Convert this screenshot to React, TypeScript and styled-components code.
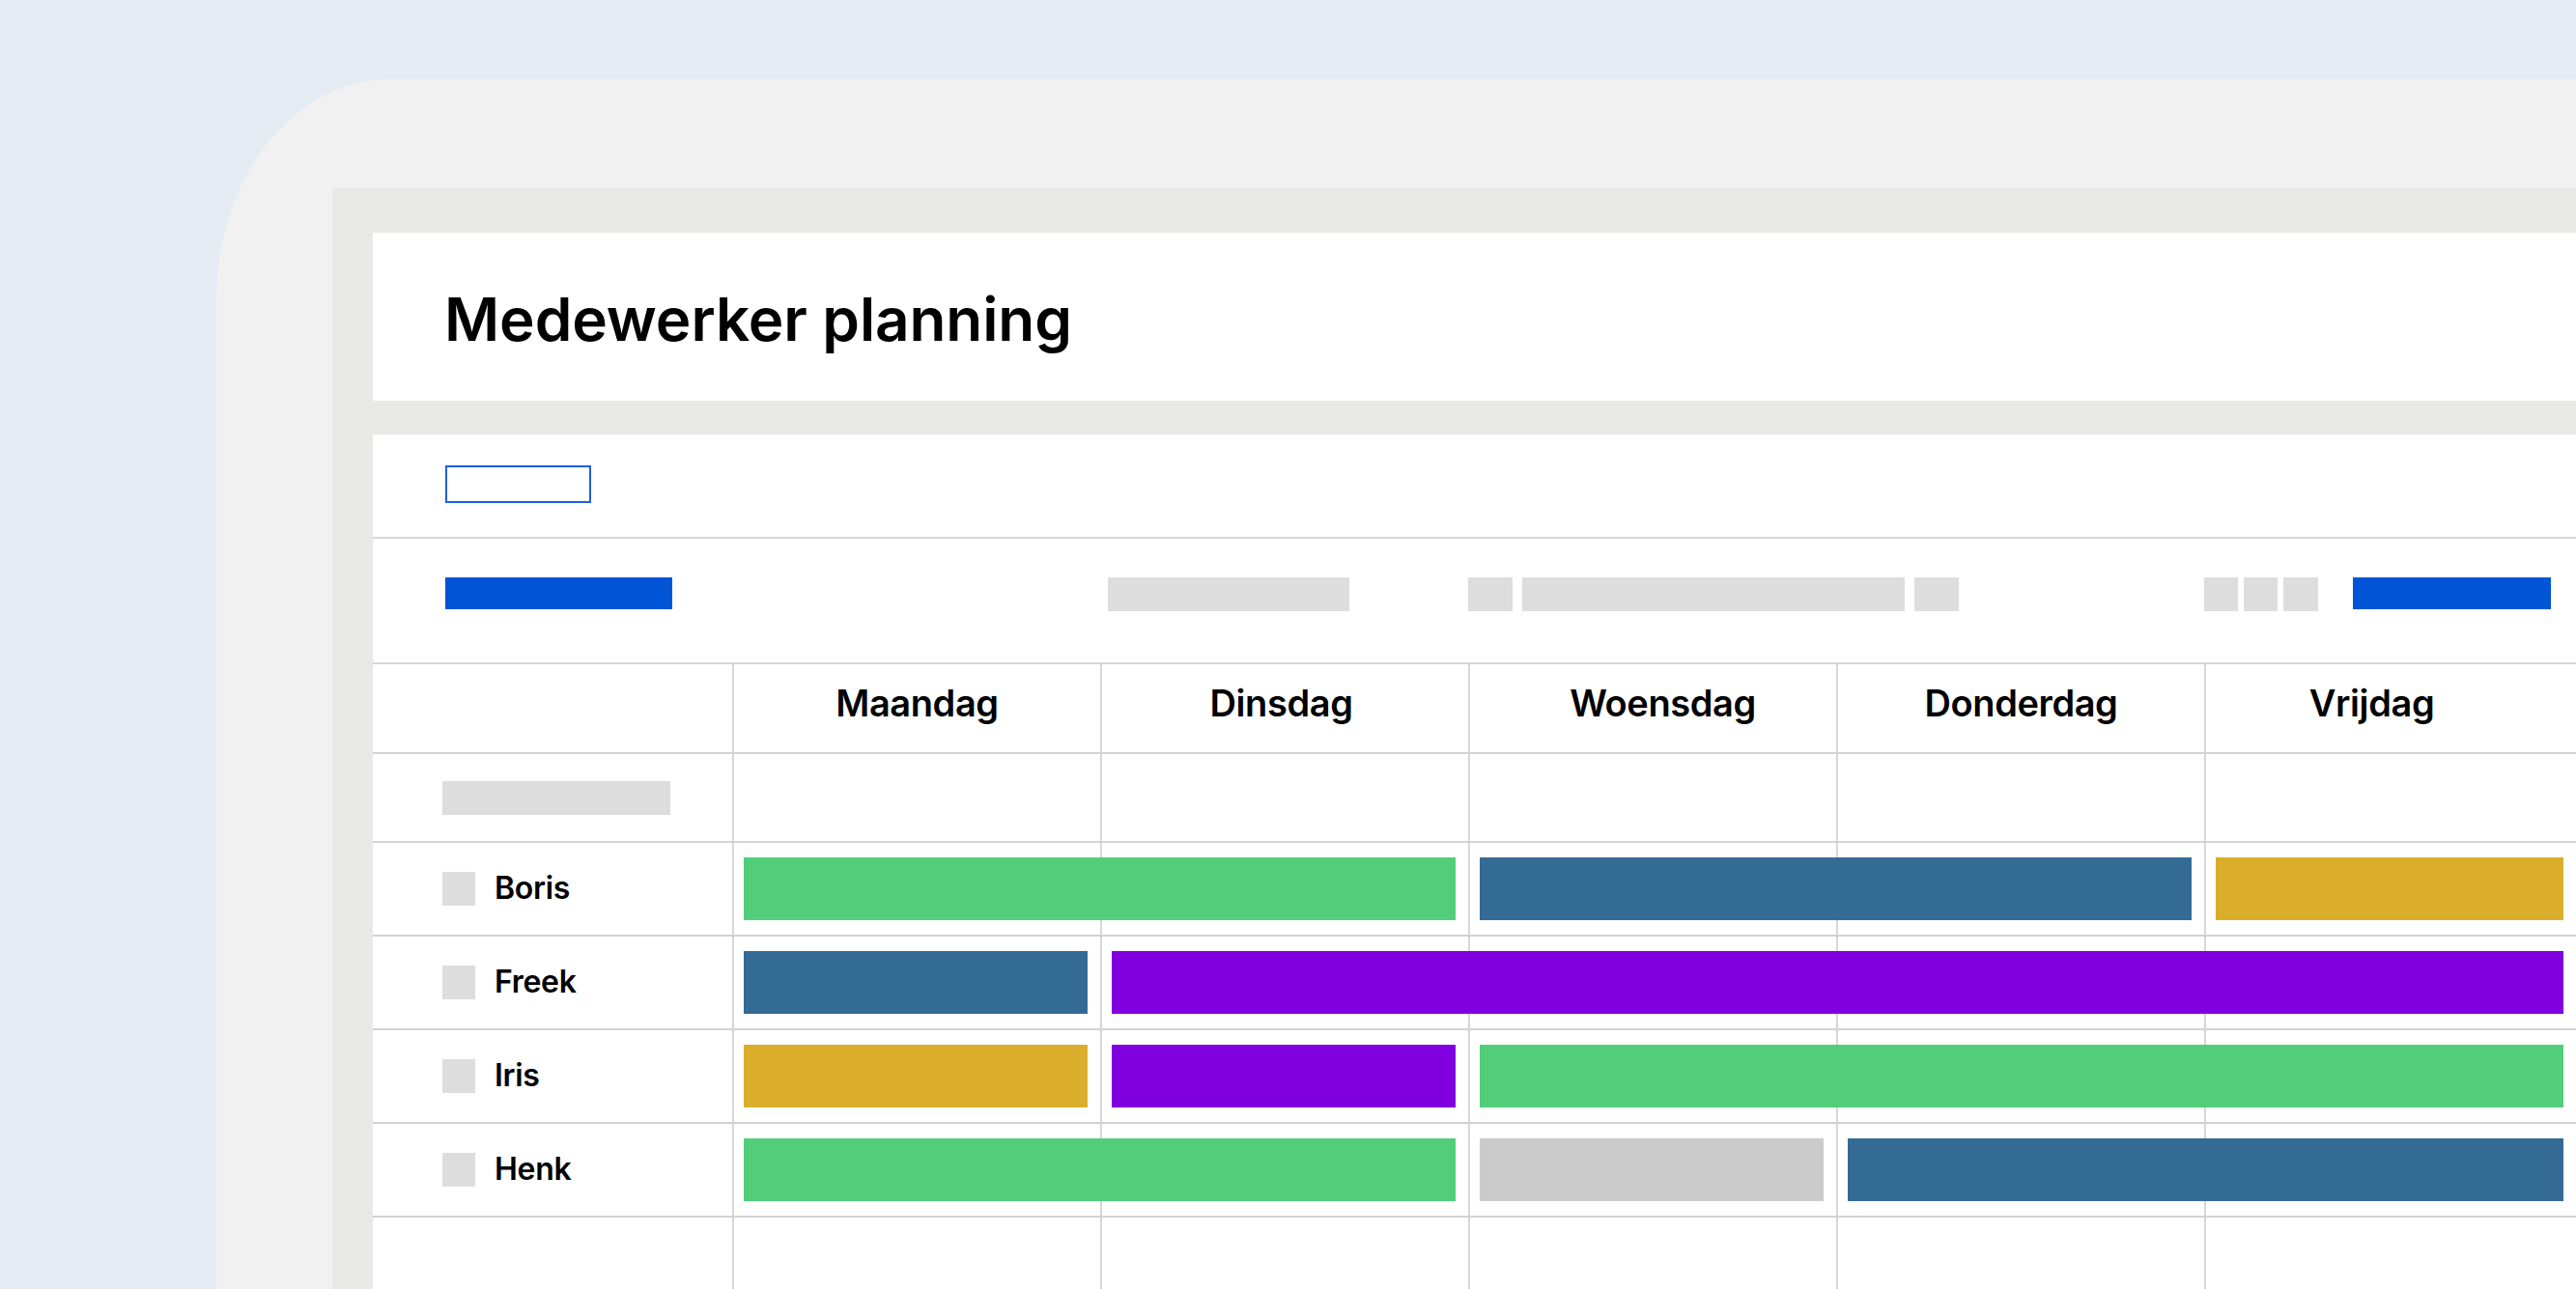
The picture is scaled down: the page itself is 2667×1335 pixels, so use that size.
import React from "react";
import styled, { createGlobalStyle } from "styled-components";

const Global = createGlobalStyle`
  html, body { margin: 0; padding: 0; }
  body {
    background: #e4ebf2;
    overflow: hidden;
    font-family: "Inter", "Lato", "Noto Sans", "Liberation Sans", sans-serif;
  }
  * { box-sizing: border-box; }
`;

const Page = styled.div`
  width: 2667px;
  height: 1335px;
  padding: 82px 0 0 224px;
  display: flex;
  flex-direction: column;
  overflow: hidden;
`;

const Device = styled.div`
  flex: 1;
  background: #f1f1f1;
  border-top-left-radius: 180px 227px;
  padding: 112px 0 0 120px;
  display: flex;
  flex-direction: column;
`;

const Frame = styled.div`
  flex: 1;
  background: #e8e8e6;
  padding: 47px 0 0 42px;
  display: flex;
  flex-direction: column;
  gap: 35px;
`;

const HeaderPanel = styled.header`
  height: 174px;
  background: #ffffff;
  display: flex;
  align-items: center;
  padding-left: 74px;
`;

const Title = styled.h1`
  margin: 0;
  font-family: "Inter", "Lato", "Noto Sans", sans-serif;
  font-weight: 600;
  font-size: 62px;
  letter-spacing: -0.1px;
  color: #000;
  line-height: 1;
  padding-top: 6px;
`;

const Content = styled.main`
  flex: 1;
  background: #ffffff;
  display: flex;
  flex-direction: column;
`;

const FilterBar = styled.div`
  height: 108px;
  padding: 32px 0 0 75px;
  border-bottom: 2px solid #d6d6d6;
`;

const OutlineInput = styled.div`
  width: 151px;
  height: 39px;
  border: 2px solid #1a5fe0;
  background: #fff;
`;

const Toolbar = styled.div`
  height: 130px;
  padding: 40px 26px 0 75px;
  border-bottom: 2px solid #d6d6d6;
  display: flex;
  align-items: flex-start;
`;

const Group = styled.div<{ $ml?: number; $gap: number }>`
  display: flex;
  gap: ${(p) => p.$gap}px;
  margin-left: ${(p) => p.$ml ?? 0}px;
`;

const Block = styled.div<{ $w: number; $primary?: boolean }>`
  width: ${(p) => p.$w}px;
  height: ${(p) => (p.$primary ? 33 : 35)}px;
  background: ${(p) => (p.$primary ? "#0055d6" : "#dddddd")};
`;

const Table = styled.div`
  flex: 1;
  display: flex;
  flex-direction: column;
`;

const Row = styled.div<{ $h?: number; $last?: boolean }>`
  display: grid;
  grid-template-columns: 372px 381px 381px 381px 381px 1fr;
  grid-template-rows: 100%;
  ${(p) => (p.$last ? "flex: 1;" : `height: ${p.$h}px;`)}
  border-bottom: ${(p) => (p.$last ? "none" : "2px solid #d2d2d2")};
`;

const Cell = styled.div<{ $col: number }>`
  grid-row: 1;
  grid-column: ${(p) => p.$col};
  border-left: ${(p) => (p.$col > 1 ? "2px solid #d6d6d6" : "none")};
  display: flex;
  align-items: center;
`;

const DayCell = styled(Cell)<{ $shift: number }>`
  justify-content: center;
  font-family: "Inter", "Lato", "Noto Sans", sans-serif;
  font-weight: 600;
  font-size: 38px;
  letter-spacing: -0.4px;
  color: #000;
  padding-bottom: 12px;
  padding-left: ${(p) => Math.max(0, p.$shift * 2)}px;
  padding-right: ${(p) => Math.max(0, -p.$shift * 2)}px;
`;

const NameCell = styled(Cell)`
  padding-left: 72px;
  gap: 20px;
`;

const Check = styled.div`
  width: 34px;
  height: 35px;
  background: #dddddd;
`;

const Name = styled.span`
  font-family: "Inter", "Lato", "Noto Sans", sans-serif;
  font-weight: 600;
  font-size: 32px;
  letter-spacing: -0.3px;
  color: #000;
  padding-bottom: 2px;
`;

const LabelBar = styled.div`
  width: 236px;
  height: 35px;
  background: #dddddd;
`;

const Bar = styled.div<{ $from: number; $to: number; $color: string }>`
  grid-row: 1;
  grid-column: ${(p) => p.$from + 2} / ${(p) => p.$to + 2};
  align-self: start;
  margin: 15px 13px 0 12px;
  height: 65px;
  background: ${(p) => p.$color};
`;

const C = {
  green: "#52ce7b",
  blue: "#346b94",
  yellow: "#daae2a",
  purple: "#8000e0",
  grey: "#cbcbcb",
};

const days = [
  { label: "Maandag", shift: 0 },
  { label: "Dinsdag", shift: -4 },
  { label: "Woensdag", shift: 10 },
  { label: "Donderdag", shift: 0 },
  { label: "Vrijdag", shift: -20 },
];

type Shift = { from: number; to: number; color: string };
const people: { name: string; shifts: Shift[] }[] = [
  {
    name: "Boris",
    shifts: [
      { from: 0, to: 2, color: C.green },
      { from: 2, to: 4, color: C.blue },
      { from: 4, to: 5, color: C.yellow },
    ],
  },
  {
    name: "Freek",
    shifts: [
      { from: 0, to: 1, color: C.blue },
      { from: 1, to: 5, color: C.purple },
    ],
  },
  {
    name: "Iris",
    shifts: [
      { from: 0, to: 1, color: C.yellow },
      { from: 1, to: 2, color: C.purple },
      { from: 2, to: 5, color: C.green },
    ],
  },
  {
    name: "Henk",
    shifts: [
      { from: 0, to: 2, color: C.green },
      { from: 2, to: 3, color: C.grey },
      { from: 3, to: 5, color: C.blue },
    ],
  },
];

const EmptyCells = () => (
  <>
    {days.map((d, i) => (
      <Cell key={d.label} $col={i + 2} />
    ))}
  </>
);

export default function App() {
  return (
    <>
      <Global />
      <Page>
        <Device>
          <Frame>
            <HeaderPanel>
              <Title>Medewerker planning</Title>
            </HeaderPanel>
            <Content>
              <FilterBar>
                <OutlineInput />
              </FilterBar>
              <Toolbar>
                <Block $w={236} $primary />
                <Group $ml={451} $gap={0}>
                  <Block $w={250} />
                </Group>
                <Group $ml={123} $gap={10}>
                  <Block $w={46} />
                  <Block $w={396} />
                  <Block $w={46} />
                </Group>
                <Group $ml={254} $gap={6}>
                  <Block $w={35} />
                  <Block $w={35} />
                  <Block $w={36} />
                </Group>
                <Group $ml={36} $gap={0}>
                  <Block $w={205} $primary />
                </Group>
              </Toolbar>
              <Table>
                <Row $h={93}>
                  <Cell $col={1} />
                  {days.map((d, i) => (
                    <DayCell key={d.label} $col={i + 2} $shift={d.shift}>
                      {d.label}
                    </DayCell>
                  ))}
                </Row>
                <Row $h={92}>
                  <NameCell $col={1}>
                    <LabelBar />
                  </NameCell>
                  <EmptyCells />
                </Row>
                {people.map((p) => (
                  <Row key={p.name} $h={97}>
                    <NameCell $col={1}>
                      <Check />
                      <Name>{p.name}</Name>
                    </NameCell>
                    <EmptyCells />
                    {p.shifts.map((s, i) => (
                      <Bar key={i} $from={s.from} $to={s.to} $color={s.color} />
                    ))}
                  </Row>
                ))}
                <Row $last>
                  <Cell $col={1} />
                  <EmptyCells />
                </Row>
              </Table>
            </Content>
          </Frame>
        </Device>
      </Page>
    </>
  );
}
